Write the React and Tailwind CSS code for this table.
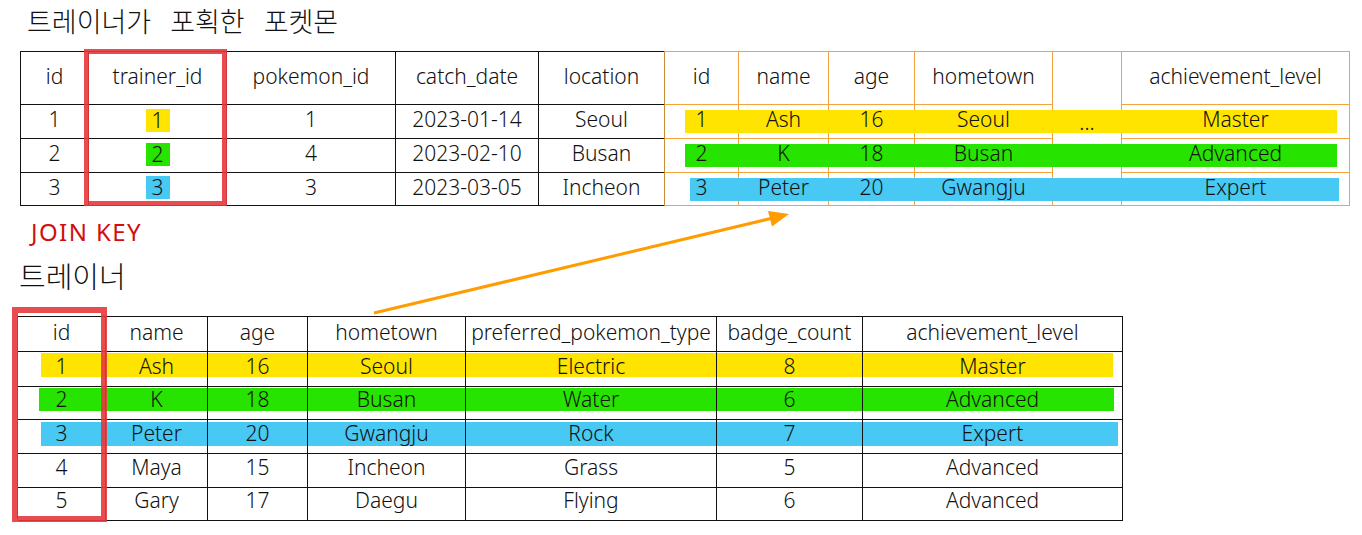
import React from 'react';

const C = ['col-start-1', 'col-start-2', 'col-start-3', 'col-start-4', 'col-start-5', 'col-start-6', 'col-start-7'];
const R = ['row-start-1', 'row-start-2', 'row-start-3', 'row-start-4', 'row-start-5', 'row-start-6'];

const Y = 'bg-[#ffe400]';
const G = 'bg-[#27e300]';
const B = 'bg-[#47c9f4]';

function CatchTable() {
  const header = ['id', 'trainer_id', 'pokemon_id', 'catch_date', 'location'];
  const rows = [
    ['1', ['1', Y], '1', '2023-01-14', 'Seoul'],
    ['2', ['2', G], '4', '2023-02-10', 'Busan'],
    ['3', ['3', B], '3', '2023-03-05', 'Incheon'],
  ];
  return (
    <div className="relative">
      <div className="grid grid-cols-[68px_138px_169px_143px_125px] grid-rows-[53px_34px_34px_33px] border-t border-l border-[#111]">
        {header.map((h, i) => (
          <div
            key={h}
            className={`flex items-center justify-center pb-[2px] border-b border-[#111] ${i < 4 ? 'border-r' : ''}`}
          >
            {h}
          </div>
        ))}
        {rows.map((row, r) =>
          row.map((v, i) => (
            <div
              key={`${r}-${i}`}
              className={`flex items-center justify-center pb-[3px] border-b border-[#111] ${i < 4 ? 'border-r' : ''}`}
            >
              {Array.isArray(v) ? (
                <span className={`inline-block px-[6px] leading-[23px] ${v[1]}`}>{v[0]}</span>
              ) : (
                v
              )}
            </div>
          ))
        )}
      </div>
      <div className="absolute left-[64px] top-[-2px] w-[143px] h-[157px] border-[5px] border-[#e6383b]/90 pointer-events-none" />
    </div>
  );
}

function JoinedTable() {
  const O = 'border-[#f5a23a]';
  const header = [
    ['id', 0],
    ['name', 1],
    ['age', 2],
    ['hometown', 3],
    ['achievement_level', 5],
  ];
  const rows = [
    ['1', 'Ash', '16', 'Seoul', 'Master'],
    ['2', 'K', '18', 'Busan', 'Advanced'],
    ['3', 'Peter', '20', 'Gwangju', 'Expert'],
  ];
  const cols = [0, 1, 2, 3, 5];
  const bars = [
    `${Y} ml-[20px] mr-[13px] mt-[5px] h-[23px]`,
    `${G} ml-[20px] mr-[13px] mt-[5px] h-[23px]`,
    `${B} ml-[25px] mr-[11px] mt-[5px] h-[23px]`,
  ];
  return (
    <div className="grid grid-cols-[74px_90px_86px_138px_69px_228px] grid-rows-[53px_34px_34px_33px] border-t border-l border-t-[#f5a23a] border-l-[#c98a35]">
      {header.map(([h, c]) => (
        <div
          key={h}
          className={`${C[c]} row-start-1 flex items-center justify-center pb-[2px] border-r border-b ${O}`}
        >
          {h}
        </div>
      ))}
      <div className="col-start-5 row-start-1 row-span-4 flex justify-center pt-[54px] border-r border-b border-[#f5a23a]">
        <span className="relative z-[2] leading-[32px]">...</span>
      </div>
      {bars.map((b, r) => (
        <div key={`bar-${r}`} className={`${R[r + 1]} col-start-1 col-end-7 z-[1] ${b}`} />
      ))}
      {rows.map((row, r) =>
        row.map((v, i) => (
          <div
            key={`${r}-${i}`}
            className={`${R[r + 1]} ${C[cols[i]]} flex items-center justify-center pb-[3px] border-r border-b ${O}`}
          >
            <span className="relative z-[2]">{v}</span>
          </div>
        ))
      )}
    </div>
  );
}

function TrainerTable() {
  const grid = 'grid grid-cols-[88px_102px_100px_158px_251px_146px_260px]';
  const header = ['id', 'name', 'age', 'hometown', 'preferred_pokemon_type', 'badge_count', 'achievement_level'];
  const rows = [
    { v: ['1', 'Ash', '16', 'Seoul', 'Electric', '8', 'Master'], h: 'h-[33px]', bar: `${Y} ml-[23px] mr-[10px] mt-[2px] h-[24px]` },
    { v: ['2', 'K', '18', 'Busan', 'Water', '6', 'Advanced'], h: 'h-[34px]', bar: `${G} ml-[21px] mr-[9px] mt-[4px] h-[23px]` },
    { v: ['3', 'Peter', '20', 'Gwangju', 'Rock', '7', 'Expert'], h: 'h-[34px]', bar: `${B} ml-[23px] mr-[5px] mt-[4px] h-[24px]` },
    { v: ['4', 'Maya', '15', 'Incheon', 'Grass', '5', 'Advanced'], h: 'h-[33px]', bar: null },
    { v: ['5', 'Gary', '17', 'Daegu', 'Flying', '6', 'Advanced'], h: 'h-[34px]', bar: null },
  ];
  return (
    <div className="relative w-fit">
      <div className="border-t border-l border-[#111]">
        <div className={`${grid} h-[34px]`}>
          {header.map((h) => (
            <div key={h} className="flex items-center justify-center pb-[2px] border-r border-b border-[#111]">
              {h}
            </div>
          ))}
        </div>
        {rows.map((row, r) => (
          <div key={r} className={`${grid} ${row.h}`}>
            {row.bar && <div className={`row-start-1 col-start-1 col-end-8 ${row.bar}`} />}
            {row.v.map((v, i) => (
              <div
                key={i}
                className={`row-start-1 ${C[i]} flex items-center justify-center pb-[3px] border-r border-b border-[#111]`}
              >
                {v}
              </div>
            ))}
          </div>
        ))}
      </div>
      <div className="absolute left-[-5px] top-[-9px] w-[95px] h-[215px] border-[6px] border-[#e6383b]/90 pointer-events-none" />
    </div>
  );
}

export default function App() {
  return (
    <div className="relative w-[1362px] h-[535px] overflow-hidden bg-white text-[#111] text-[21px] font-light font-['Noto_Sans','Noto_Sans_CJK_KR',sans-serif]">
      <div className="h-[51px] pl-[27px] pt-[1px]">
        <div className="text-[27px] leading-[39px] font-light font-['Noto_Sans_CJK_KR',sans-serif] [word-spacing:13px]">
          트레이너가 포획한 포켓몬
        </div>
      </div>
      <div className="flex ml-[20px]">
        <CatchTable />
        <JoinedTable />
      </div>
      <div className="mt-[10px] h-[32px] pl-[31px] text-[24px] leading-[32px] tracking-[1.4px] font-normal text-[#d20f0f]">
        JOIN KEY
      </div>
      <div className="mt-[6px] h-[42px] pl-[19px] text-[29px] leading-[42px] font-light font-['Noto_Sans_CJK_KR',sans-serif]">
        트레이너
      </div>
      <div className="mt-[20px] ml-[17px]">
        <TrainerTable />
      </div>
      <svg className="absolute left-0 top-0 pointer-events-none" width="1362" height="535" viewBox="0 0 1362 535">
        <line x1="374" y1="313" x2="771" y2="218.5" stroke="#ff9c00" strokeWidth="3" />
        <polygon points="789,214 768,211 772,226.5" fill="#ff9c00" />
      </svg>
    </div>
  );
}
